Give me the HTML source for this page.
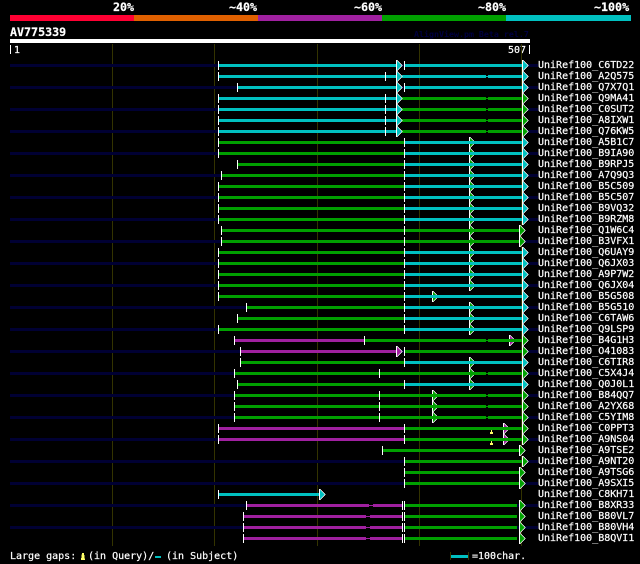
<!DOCTYPE html>
<html><head><meta charset="utf-8"><style>
html,body{margin:0;padding:0;background:#000;width:640px;height:564px;overflow:hidden}
svg{display:block}
path,rect,polygon{shape-rendering:crispEdges}
path{fill:none}
.n,.c,.g,.p{height:3px}
.n{fill:#000033}
.c{fill:#00c0c0}
.g{fill:#00a000}
.p{fill:#a020a0}
.w{stroke:#fff;stroke-width:1}
text{font-family:"DejaVu Sans Mono","Liberation Mono",monospace;font-size:10px;fill:#fff;stroke:#fff;stroke-width:.2}
.b{font-weight:bold;font-size:11.67px}
</style></head><body>
<svg width="640" height="564" viewBox="0 0 640 564" xmlns="http://www.w3.org/2000/svg">
<defs>
<g id="C"><polygon points="0,-4 1,-4 6.5,1.5 1,7 0,7" fill="#fff"/><polygon points="1,-3 5.5,1.5 1,6" fill="#00c0c0"/></g>
<g id="G"><polygon points="0,-4 1,-4 6.5,1.5 1,7 0,7" fill="#fff"/><polygon points="1,-3 5.5,1.5 1,6" fill="#00a000"/></g>
<g id="P"><polygon points="0,-4 1,-4 6.5,1.5 1,7 0,7" fill="#fff"/><polygon points="1,-3 5.5,1.5 1,6" fill="#a020a0"/></g>
<path id="K" d="M486 .5h2M486 2.5h2" stroke="#000" stroke-width="1"/>
<path id="Q" d="M0 .5h4M0 2.5h4" stroke="#000" stroke-width="1"/>
</defs>
<rect width="640" height="564" fill="#000"/>
<rect x="10" y="15" width="124" height="6" fill="#ff0033"/>
<rect x="134" y="15" width="124" height="6" fill="#e06000"/>
<rect x="258" y="15" width="124" height="6" fill="#a020a0"/>
<rect x="382" y="15" width="124" height="6" fill="#00a000"/>
<rect x="506" y="15" width="125" height="6" fill="#00c0c0"/>
<text class="b" x="113" y="11">20%</text>
<text class="b" x="229" y="11">~40%</text>
<text class="b" x="354" y="11">~60%</text>
<text class="b" x="478" y="11">~80%</text>
<text class="b" x="594" y="11">~100%</text>
<text class="b" x="10" y="36">AV775339</text>
<text x="414" y="37" style="font-size:8.3px;fill:#000040;stroke:none;font-weight:bold">AlignView.pm Beta rel.7</text>
<rect x="10" y="39" width="520" height="4" fill="#fff"/>
<path class="w" d="M10.5 45V54M529.5 45V54"/>
<text x="14" y="53">1</text>
<text x="508" y="53">507</text>
<path d="M112.5 44V546M214.5 44V546M317.5 44V546M419.5 44V546M521.5 44V546" stroke="#333300" stroke-width="1"/>

<g transform="translate(0,64)"><rect class="n" x="10" width="528"/><rect class="c" x="219" width="177"/><use href="#C" x="396"/><rect class="c" x="405" width="117"/><path class="w" d="M218.5-3V6M404.5-3V6"/><use href="#C" x="522"/><text x="538" y="4">UniRef100_C6TD22</text></g>
<g transform="translate(0,75)"><rect class="c" x="219" width="177"/><rect class="c" x="402" width="120"/><use href="#K"/><path class="w" d="M218.5-3V6M385.5-3V6"/><use href="#C" x="396"/><use href="#C" x="522"/><text x="538" y="4">UniRef100_A2Q575</text></g>
<g transform="translate(0,86)"><rect class="n" x="10" width="528"/><rect class="c" x="238" width="158"/><use href="#C" x="396"/><rect class="c" x="405" width="117"/><path class="w" d="M237.5-3V6M404.5-3V6"/><use href="#C" x="522"/><text x="538" y="4">UniRef100_Q7X7Q1</text></g>
<g transform="translate(0,97)"><rect class="c" x="219" width="177"/><rect class="g" x="402" width="120"/><use href="#K"/><path class="w" d="M218.5-3V6M385.5-3V6"/><use href="#C" x="396"/><use href="#G" x="522"/><text x="538" y="4">UniRef100_Q9MA41</text></g>
<g transform="translate(0,108)"><rect class="n" x="10" width="528"/><rect class="c" x="219" width="177"/><rect class="g" x="402" width="120"/><use href="#K"/><path class="w" d="M218.5-3V6M385.5-3V6"/><use href="#C" x="396"/><use href="#G" x="522"/><text x="538" y="4">UniRef100_C0SUT2</text></g>
<g transform="translate(0,119)"><rect class="c" x="219" width="177"/><rect class="g" x="402" width="120"/><use href="#K"/><path class="w" d="M218.5-3V6M385.5-3V6"/><use href="#C" x="396"/><use href="#G" x="522"/><text x="538" y="4">UniRef100_A8IXW1</text></g>
<g transform="translate(0,130)"><rect class="n" x="10" width="528"/><rect class="c" x="219" width="177"/><rect class="g" x="402" width="120"/><use href="#K"/><path class="w" d="M218.5-3V6M385.5-3V6"/><use href="#C" x="396"/><use href="#G" x="522"/><text x="538" y="4">UniRef100_Q76KW5</text></g>
<g transform="translate(0,141)"><use href="#G" x="469"/><rect class="g" x="219" width="185"/><rect class="c" x="405" width="117"/><path class="w" d="M218.5-3V6M404.5-3V6"/><use href="#C" x="522"/><text x="538" y="4">UniRef100_A5B1C7</text></g>
<g transform="translate(0,152)"><rect class="n" x="10" width="528"/><use href="#G" x="469"/><rect class="g" x="219" width="185"/><rect class="c" x="405" width="117"/><path class="w" d="M218.5-3V6M404.5-3V6"/><use href="#C" x="522"/><text x="538" y="4">UniRef100_B9IA90</text></g>
<g transform="translate(0,163)"><use href="#G" x="469"/><rect class="g" x="238" width="166"/><rect class="c" x="405" width="117"/><path class="w" d="M237.5-3V6M404.5-3V6"/><use href="#C" x="522"/><text x="538" y="4">UniRef100_B9RPJ5</text></g>
<g transform="translate(0,174)"><rect class="n" x="10" width="528"/><use href="#G" x="469"/><rect class="g" x="222" width="182"/><rect class="c" x="405" width="117"/><path class="w" d="M221.5-3V6M404.5-3V6"/><use href="#C" x="522"/><text x="538" y="4">UniRef100_A7Q9Q3</text></g>
<g transform="translate(0,185)"><use href="#G" x="469"/><rect class="g" x="219" width="185"/><rect class="c" x="405" width="117"/><path class="w" d="M218.5-3V6M404.5-3V6"/><use href="#C" x="522"/><text x="538" y="4">UniRef100_B5C509</text></g>
<g transform="translate(0,196)"><rect class="n" x="10" width="528"/><use href="#G" x="469"/><rect class="g" x="219" width="185"/><rect class="c" x="405" width="117"/><path class="w" d="M218.5-3V6M404.5-3V6"/><use href="#C" x="522"/><text x="538" y="4">UniRef100_B5C507</text></g>
<g transform="translate(0,207)"><use href="#G" x="469"/><rect class="g" x="219" width="185"/><rect class="c" x="405" width="117"/><path class="w" d="M218.5-3V6M404.5-3V6"/><use href="#C" x="522"/><text x="538" y="4">UniRef100_B9VQ32</text></g>
<g transform="translate(0,218)"><rect class="n" x="10" width="528"/><use href="#G" x="469"/><rect class="g" x="219" width="185"/><rect class="c" x="405" width="117"/><path class="w" d="M218.5-3V6M404.5-3V6"/><use href="#C" x="522"/><text x="538" y="4">UniRef100_B9RZM8</text></g>
<g transform="translate(0,229)"><use href="#G" x="469"/><rect class="g" x="222" width="297"/><path class="w" d="M221.5-3V6M404.5-3V6"/><use href="#G" x="519"/><text x="538" y="4">UniRef100_Q1W6C4</text></g>
<g transform="translate(0,240)"><rect class="n" x="10" width="528"/><use href="#G" x="469"/><rect class="g" x="222" width="297"/><path class="w" d="M221.5-3V6M404.5-3V6"/><use href="#G" x="519"/><text x="538" y="4">UniRef100_B3VFX1</text></g>
<g transform="translate(0,251)"><use href="#G" x="469"/><rect class="g" x="219" width="185"/><rect class="c" x="405" width="117"/><path class="w" d="M218.5-3V6M404.5-3V6"/><use href="#C" x="522"/><text x="538" y="4">UniRef100_Q6UAY9</text></g>
<g transform="translate(0,262)"><rect class="n" x="10" width="528"/><use href="#G" x="469"/><rect class="g" x="219" width="185"/><rect class="c" x="405" width="117"/><path class="w" d="M218.5-3V6M404.5-3V6"/><use href="#C" x="522"/><text x="538" y="4">UniRef100_Q6JX03</text></g>
<g transform="translate(0,273)"><use href="#G" x="469"/><rect class="g" x="219" width="185"/><rect class="c" x="405" width="117"/><path class="w" d="M218.5-3V6M404.5-3V6"/><use href="#C" x="522"/><text x="538" y="4">UniRef100_A9P7W2</text></g>
<g transform="translate(0,284)"><rect class="n" x="10" width="528"/><use href="#G" x="469"/><rect class="g" x="219" width="185"/><rect class="c" x="405" width="117"/><path class="w" d="M218.5-3V6M404.5-3V6"/><use href="#C" x="522"/><text x="538" y="4">UniRef100_Q6JX04</text></g>
<g transform="translate(0,295)"><use href="#G" x="432"/><rect class="g" x="219" width="185"/><rect class="c" x="405" width="117"/><path class="w" d="M218.5-3V6M404.5-3V6"/><use href="#C" x="522"/><text x="538" y="4">UniRef100_B5G508</text></g>
<g transform="translate(0,306)"><rect class="n" x="10" width="528"/><use href="#G" x="469"/><rect class="g" x="247" width="157"/><rect class="c" x="405" width="117"/><path class="w" d="M246.5-3V6M404.5-3V6"/><use href="#C" x="522"/><text x="538" y="4">UniRef100_B5G510</text></g>
<g transform="translate(0,317)"><use href="#G" x="469"/><rect class="g" x="238" width="166"/><rect class="c" x="405" width="117"/><path class="w" d="M237.5-3V6M404.5-3V6"/><use href="#C" x="522"/><text x="538" y="4">UniRef100_C6TAW6</text></g>
<g transform="translate(0,328)"><rect class="n" x="10" width="528"/><use href="#G" x="469"/><rect class="g" x="219" width="185"/><rect class="c" x="405" width="117"/><path class="w" d="M218.5-3V6M404.5-3V6"/><use href="#C" x="522"/><text x="538" y="4">UniRef100_Q9LSP9</text></g>
<g transform="translate(0,339)"><use href="#P" x="509"/><rect class="p" x="235" width="129"/><rect class="g" x="365" width="157"/><use href="#K"/><path class="w" d="M234.5-3V6M364.5-3V6"/><use href="#G" x="522"/><text x="538" y="4">UniRef100_B4G1H3</text></g>
<g transform="translate(0,350)"><rect class="n" x="10" width="528"/><rect class="p" x="241" width="155"/><use href="#P" x="396"/><rect class="g" x="405" width="117"/><path class="w" d="M240.5-3V6M404.5-3V6"/><use href="#G" x="522"/><text x="538" y="4">UniRef100_O41083</text></g>
<g transform="translate(0,361)"><use href="#G" x="469"/><rect class="g" x="241" width="163"/><rect class="c" x="405" width="117"/><path class="w" d="M240.5-3V6M404.5-3V6"/><use href="#C" x="522"/><text x="538" y="4">UniRef100_C6TIR8</text></g>
<g transform="translate(0,372)"><rect class="n" x="10" width="528"/><use href="#G" x="469"/><rect class="g" x="235" width="287"/><use href="#K"/><path class="w" d="M234.5-3V6M379.5-3V6"/><use href="#G" x="522"/><text x="538" y="4">UniRef100_C5X4J4</text></g>
<g transform="translate(0,383)"><use href="#G" x="469"/><rect class="g" x="238" width="166"/><rect class="c" x="405" width="117"/><path class="w" d="M237.5-3V6M404.5-3V6"/><use href="#C" x="522"/><text x="538" y="4">UniRef100_Q0J0L1</text></g>
<g transform="translate(0,394)"><rect class="n" x="10" width="528"/><use href="#G" x="432"/><rect class="g" x="235" width="287"/><use href="#K"/><path class="w" d="M234.5-3V6M379.5-3V6"/><use href="#G" x="522"/><text x="538" y="4">UniRef100_B84QQ7</text></g>
<g transform="translate(0,405)"><use href="#G" x="432"/><rect class="g" x="235" width="287"/><use href="#K"/><path class="w" d="M234.5-3V6M379.5-3V6"/><use href="#G" x="522"/><text x="538" y="4">UniRef100_A2YX68</text></g>
<g transform="translate(0,416)"><rect class="n" x="10" width="528"/><use href="#G" x="432"/><rect class="g" x="235" width="287"/><use href="#K"/><path class="w" d="M234.5-3V6M379.5-3V6"/><use href="#G" x="522"/><text x="538" y="4">UniRef100_C5YIM8</text></g>
<g transform="translate(0,427)"><use href="#P" x="503"/><rect class="p" x="219" width="185"/><rect class="g" x="405" width="117"/><path class="w" d="M218.5-3V6M404.5-3V6"/><use href="#G" x="522"/><rect x="490" y="5" width="3" height="2" fill="#ffff66"/><rect x="491" y="3" width="1" height="2" fill="#ffff66"/><text x="538" y="4">UniRef100_C0PPT3</text></g>
<g transform="translate(0,438)"><rect class="n" x="10" width="528"/><use href="#P" x="503"/><rect class="p" x="219" width="185"/><rect class="g" x="405" width="117"/><path class="w" d="M218.5-3V6M404.5-3V6"/><use href="#G" x="522"/><rect x="490" y="5" width="3" height="2" fill="#ffff66"/><rect x="491" y="3" width="1" height="2" fill="#ffff66"/><text x="538" y="4">UniRef100_A9NS04</text></g>
<g transform="translate(0,449)"><rect class="g" x="383" width="136"/><path class="w" d="M382.5-3V6"/><use href="#G" x="519"/><text x="538" y="4">UniRef100_A9TSE2</text></g>
<g transform="translate(0,460)"><rect class="n" x="10" width="528"/><rect class="g" x="405" width="117"/><path class="w" d="M404.5-3V6"/><use href="#G" x="522"/><text x="538" y="4">UniRef100_A9NT20</text></g>
<g transform="translate(0,471)"><rect class="g" x="405" width="114"/><path class="w" d="M404.5-3V6"/><use href="#G" x="519"/><text x="538" y="4">UniRef100_A9TSG6</text></g>
<g transform="translate(0,482)"><rect class="n" x="10" width="528"/><rect class="g" x="405" width="114"/><path class="w" d="M404.5-3V6"/><use href="#G" x="519"/><text x="538" y="4">UniRef100_A9SXI5</text></g>
<g transform="translate(0,493)"><rect class="c" x="219" width="100"/><path class="w" d="M218.5-3V6"/><use href="#C" x="319"/><text x="538" y="4">UniRef100_C8KH71</text></g>
<g transform="translate(0,504)"><rect class="n" x="10" width="528"/><rect class="p" x="247" width="155"/><use href="#Q" x="369"/><rect class="g" x="405" width="112"/><path class="w" d="M246.5-3V6M402.5-3V6M404.5-3V6"/><use href="#G" x="519"/><text x="538" y="4">UniRef100_B8XR33</text></g>
<g transform="translate(0,515)"><rect class="p" x="244" width="158"/><use href="#Q" x="366"/><rect class="g" x="405" width="112"/><path class="w" d="M243.5-3V6M402.5-3V6M404.5-3V6"/><use href="#G" x="519"/><text x="538" y="4">UniRef100_B80VL7</text></g>
<g transform="translate(0,526)"><rect class="n" x="10" width="528"/><rect class="p" x="244" width="158"/><use href="#Q" x="366"/><rect class="g" x="405" width="112"/><path class="w" d="M243.5-3V6M402.5-3V6M404.5-3V6"/><use href="#G" x="519"/><text x="538" y="4">UniRef100_B80VH4</text></g>
<g transform="translate(0,537)"><rect class="p" x="244" width="158"/><use href="#Q" x="366"/><rect class="g" x="405" width="112"/><path class="w" d="M243.5-3V6M402.5-3V6M404.5-3V6"/><use href="#G" x="519"/><text x="538" y="4">UniRef100_B8QVI1</text></g>

<text x="10" y="559">Large gaps:</text>
<polygon points="82,553 84,553 85,560 81,560" fill="#ffff66"/>
<text x="88" y="559">(in Query)/</text>
<rect x="155" y="556" width="6" height="2" fill="#00c0c0"/>
<text x="166" y="559">(in Subject)</text>
<path d="M450.5 552V560M468.5 552V560" stroke="#333300" stroke-width="1"/>
<rect x="451" y="555" width="17" height="3" fill="#00c0c0"/>
<text x="472" y="559">=100char.</text>
</svg>
</body></html>
